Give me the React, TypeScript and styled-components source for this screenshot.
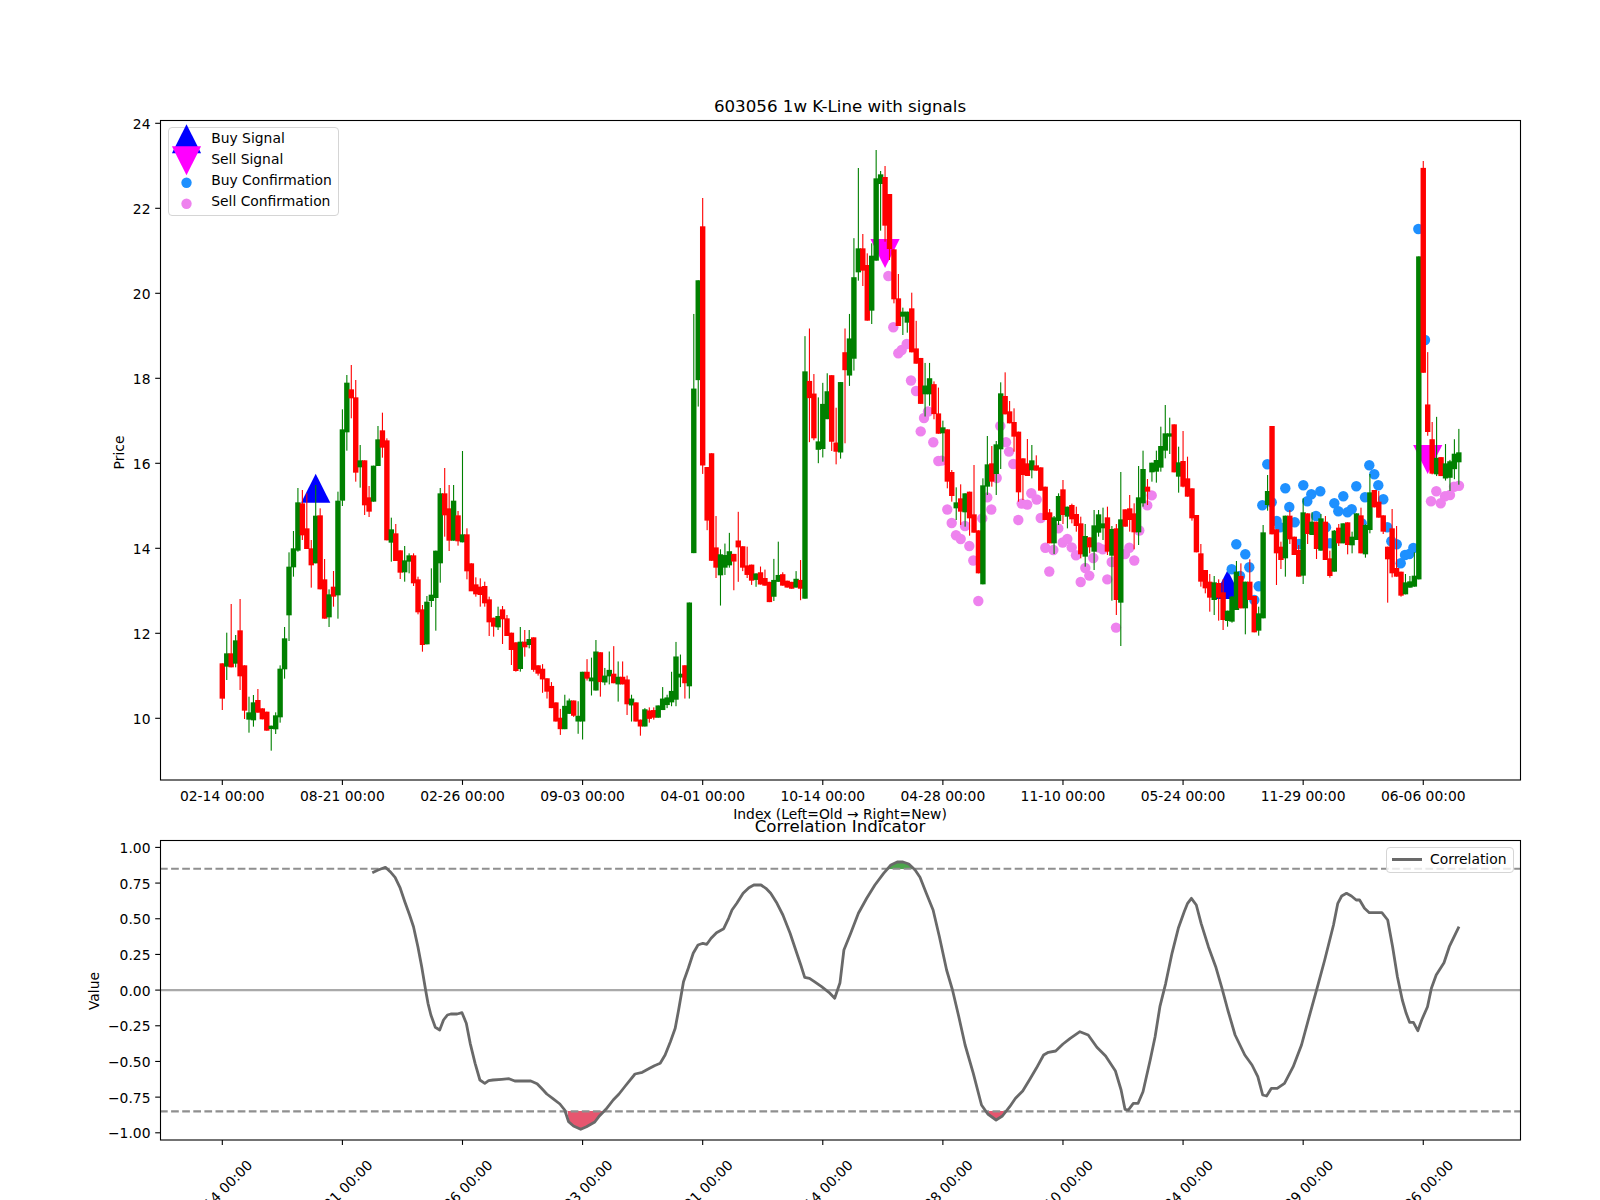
import React from 'react';
import styled, { createGlobalStyle } from 'styled-components';

const GlobalStyle = createGlobalStyle`
    html, body {
        margin: 0;
        padding: 0;
        background: #fff;
    }
    body {
        font-family: "DejaVu Sans", sans-serif;
    }
`;

const Figure = styled.div`
    display: flex;
    flex-direction: column;
    width: 1600px;
    height: 1200px;
    overflow: hidden;
    background: #fff;
`;

const Panel = styled.section<{ $height: number }>`
    position: relative;
    flex: none;
    width: 1600px;
    height: ${p => p.$height}px;
`;

const ChartSvg = styled.svg`
    display: block;
    width: 100%;
    height: 100%;
    overflow: visible;
`;

const Frame = styled.rect`
    fill: none;
    stroke: #000;
    stroke-width: 1.1px;
`;

const Tick = styled.line`
    stroke: #000;
    stroke-width: 1.1px;
`;

const TickLabel = styled.text`
    font-family: "DejaVu Sans", sans-serif;
    font-size: 13.89px;
    fill: #000;
`;

const ChartTitle = styled.text`
    font-family: "DejaVu Sans", sans-serif;
    font-size: 16.67px;
    fill: #000;
    text-anchor: middle;
`;

const Legend = styled.div`
    position: absolute;
    box-sizing: border-box;
    border: 1.4px solid #d5d5d5;
    border-radius: 4px;
    background: rgba(255, 255, 255, 0.8);
    font-size: 13.89px;
    color: #000;
    white-space: nowrap;
`;

const SignalLegend = styled(Legend)`
    left: 167.5px;
    top: 127px;
    width: 171px;
    height: 88.5px;
`;

const CorrelationLegend = styled(Legend)`
    right: 86px;
    top: 47px;
    width: 128px;
    height: 25.5px;
    display: flex;
    align-items: center;
    gap: 8.5px;
    padding: 0 0 2px 4.5px;
`;

const LegendRow = styled.div`
    display: flex;
    align-items: center;
    height: 20.9px;
`;

const LegendMarker = styled.svg`
    flex: none;
    width: 29px;
    height: 20.7px;
    margin: 0 10px 0 3.7px;
    overflow: visible;
`;

const LegendLine = styled.span`
    flex: none;
    width: 30px;
    height: 2.8px;
    margin-top: 2px;
    background: #696969;
`;

type Row = [number, number, number, number, number];

const R = 0;
const G = 1;

const BASE_X = 222.3;
const STEP_X = 4.448;
const BODY_W = 5.4;

// rows were read off crops of the price chart: colour, body top, body bottom, wick top, wick bottom
const seg = (start: number, y0: number, sy: number, rows: Row[]) =>
    rows.map(([c, a, b, d, e], n) => ({
        x: BASE_X + STEP_X * (start + n),
        color: c === G ? '#008000' : '#ff0000',
        top: y0 + a / sy,
        bottom: y0 + b / sy,
        high: y0 + d / sy,
        low: y0 + e / sy,
    }));

const candles = [
    ...seg(0, 380, 3, [
        [R, 850, 956, 850, 990], [G, 820, 860, 758, 900], [R, 820, 862, 672, 862], [G, 781, 851, 765, 862],
        [R, 751, 889, 657, 930], [R, 856, 992, 856, 1017], [G, 997, 1019, 950, 1058], [G, 967, 1021, 945, 1040],
        [R, 960, 998, 927, 998], [R, 985, 1018, 985, 1018], [R, 995, 1052, 995, 1052], [G, 1037, 1047, 1037, 1112],
        [G, 1006, 1048, 997, 1062], [G, 866, 1012, 856, 1028], [G, 775, 868, 741, 896], [G, 560, 706, 517, 783],
        [G, 505, 562, 453, 590], [G, 367, 512, 324, 515], [R, 370, 466, 330, 480], [R, 445, 507, 340, 507],
        [R, 505, 556, 480, 623], [G, 407, 550, 315, 550], [R, 406, 628, 385, 628], [R, 598, 716, 537, 716],
        [G, 643, 712, 628, 741], [R, 620, 650, 573, 680], [G, 362, 646, 335, 716], [G, 148, 362, 88, 378],
        [G, 8, 157, -15, 212], [R, 28, 55, -45, 115], [R, 52, 278, 0, 305], [G, 241, 262, 195, 323],
        [R, 241, 376, 241, 405], [R, 352, 395, 318, 411], [G, 257, 365, 257, 365], [G, 178, 258, 138, 258],
        [R, 151, 203, 98, 233], [R, 181, 481, 175, 481], [G, 448, 488, 413, 545], [R, 460, 543, 432, 543],
        [R, 511, 578, 511, 597], [G, 541, 577, 498, 605], [G, 526, 545, 520, 580], [R, 526, 610, 520, 618],
        [R, 598, 697, 590, 703], [R, 688, 795, 675, 815], [G, 665, 793, 648, 793], [G, 644, 663, 565, 681],
        [G, 512, 654, 512, 752], [G, 340, 550, 324, 608], [R, 340, 406, 264, 470], [R, 385, 482, 315, 513],
        [G, 362, 482, 315, 482], [R, 406, 484, 393, 497], [G, 463, 487, 213, 487], [R, 463, 574, 445, 598],
        [R, 550, 634, 550, 632], [R, 613, 643, 592, 650], [R, 620, 645, 595, 680], [R, 618, 670, 605, 680],
        [R, 658, 727, 650, 768], [R, 713, 740, 713, 770], [G, 708, 742, 680, 750], [R, 688, 718, 678, 792],
        [R, 715, 768, 705, 768], [R, 758, 810, 758, 855], [R, 787, 873, 787, 875], [G, 785, 867, 741, 875],
        [R, 785, 802, 750, 830], [G, 777, 795, 750, 805],
    ]),
    ...seg(70, 180, 2.613, [
        [R, 1195, 1280, 1195, 1285], [R, 1268, 1290, 1268, 1295], [R, 1277, 1305, 1265, 1340], [R, 1302, 1337, 1302, 1355],
        [R, 1322, 1380, 1312, 1380], [R, 1365, 1415, 1365, 1415], [R, 1405, 1435, 1382, 1450], [G, 1374, 1435, 1345, 1435],
        [G, 1360, 1395, 1355, 1395], [R, 1360, 1400, 1360, 1403], [G, 1400, 1415, 1362, 1447], [G, 1285, 1415, 1285, 1462],
        [R, 1285, 1303, 1252, 1308], [G, 1300, 1310, 1248, 1347], [G, 1232, 1334, 1202, 1334], [R, 1234, 1312, 1234, 1350],
        [G, 1295, 1313, 1275, 1320], [G, 1280, 1297, 1232, 1318], [R, 1290, 1315, 1218, 1315], [G, 1298, 1318, 1258, 1363],
        [R, 1298, 1318, 1258, 1318], [R, 1305, 1370, 1295, 1398], [G, 1355, 1373, 1345, 1415], [R, 1365, 1415, 1365, 1415],
        [R, 1410, 1428, 1410, 1452], [G, 1383, 1428, 1380, 1428], [R, 1386, 1408, 1378, 1418], [R, 1385, 1405, 1378, 1410],
        [G, 1373, 1405, 1373, 1405], [G, 1355, 1385, 1325, 1385], [G, 1352, 1372, 1345, 1380], [G, 1335, 1365, 1285, 1375],
        [G, 1245, 1358, 1207, 1375], [G, 1290, 1300, 1240, 1325], [R, 1268, 1315, 1268, 1355], [G, 1104, 1323, 1104, 1355],
        [G, 545, 975, 350, 975], [G, 262, 523, 262, 592], [R, 121, 746, 47, 768], [R, 750, 890, 750, 915],
        [R, 714, 995, 714, 995], [R, 960, 1013, 878, 1040], [G, 978, 1033, 965, 1112], [G, 980, 1013, 950, 1032],
        [G, 970, 1007, 922, 1013], [R, 977, 997, 977, 1072], [R, 942, 960, 867, 1050], [R, 957, 1013, 957, 1022],
        [R, 1007, 1032, 958, 1040], [R, 1005, 1047, 1005, 1058], [G, 1028, 1045, 1028, 1063], [R, 1025, 1057, 1010, 1057],
        [R, 1040, 1060, 1018, 1060], [R, 1050, 1103, 1050, 1103], [G, 1045, 1089, 990, 1100], [G, 1032, 1050, 945, 1050],
        [R, 1030, 1060, 1025, 1060], [R, 1047, 1065, 1047, 1065], [R, 1050, 1068, 1050, 1068], [G, 1042, 1065, 1022, 1065],
        [R, 1045, 1068, 993, 1098], [G, 500, 1094, 408, 1094], [R, 525, 570, 388, 685], [R, 558, 675, 507, 680],
        [G, 683, 705, 568, 740], [G, 585, 703, 530, 725], [G, 552, 625, 505, 625], [R, 510, 684, 510, 708],
        [R, 686, 710, 595, 743], [G, 528, 712, 528, 728], [R, 450, 497, 388, 688], [G, 414, 511, 350, 538],
        [G, 254, 467, 152, 498],
    ]),
    ...seg(143, 130, 3, [
        [G, 355, 427, 114, 452], [R, 355, 422, 312, 468], [R, 405, 572, 370, 572], [G, 377, 542, 340, 582],
        [G, 145, 392, 60, 392], [G, 133, 162, 123, 302], [R, 141, 287, 108, 335], [R, 192, 357, 192, 390],
        [R, 358, 508, 358, 520], [R, 505, 588, 432, 588], [G, 545, 560, 533, 615], [G, 545, 578, 545, 608],
        [R, 535, 667, 488, 667],
    ]),
    ...seg(156, 180, 2.613, [
        [R, 440, 480, 368, 480], [R, 465, 585, 465, 585], [G, 537, 560, 478, 618], [G, 518, 560, 478, 590],
    ]),
    ...seg(160, 130, 2.904, [
        [R, 738, 825, 730, 840], [R, 823, 882, 748, 882],
    ]),
    ...seg(162, 340, 3, [
        [G, 262, 280, 242, 365], [R, 268, 425, 268, 445], [R, 396, 468, 390, 485], [G, 487, 505, 442, 540],
        [R, 475, 515, 433, 555], [G, 460, 517, 460, 560], [R, 455, 535, 455, 587], [R, 523, 578, 375, 578],
        [R, 571, 700, 571, 700], [G, 436, 733, 415, 733], [G, 373, 440, 288, 465], [R, 370, 425, 318, 440],
        [G, 313, 402, 303, 465], [G, 160, 328, 127, 387], [R, 168, 223, 97, 223], [R, 214, 250, 183, 250],
        [R, 246, 290, 205, 335], [R, 275, 457, 275, 485], [R, 355, 405, 355, 480], [R, 370, 408, 297, 408],
        [G, 361, 391, 315, 415], [R, 376, 392, 346, 392], [R, 382, 452, 382, 452], [R, 440, 540, 440, 540],
        [R, 517, 610, 507, 610], [G, 532, 610, 528, 642], [G, 468, 543, 460, 555], [R, 448, 525, 420, 552],
        [G, 500, 530, 500, 565], [R, 495, 538, 491, 550], [R, 522, 558, 500, 575], [R, 550, 643, 530, 655],
        [G, 588, 650, 552, 680], [R, 592, 622, 592, 640], [G, 556, 635, 510, 690], [G, 523, 578, 510, 590],
        [G, 550, 565, 503, 600], [R, 532, 635, 500, 645], [G, 567, 647, 558, 782], [R, 565, 780, 552, 825],
    ]),
    ...seg(202, 380, 3, [
        [G, 418, 668, 276, 798], [R, 388, 440, 388, 440], [R, 385, 420, 345, 455], [R, 400, 457, 370, 508],
        [G, 352, 457, 258, 495], [G, 267, 370, 212, 380], [R, 320, 335, 297, 375], [G, 248, 277, 248, 305],
        [G, 240, 275, 212, 308], [G, 198, 263, 140, 275], [G, 160, 212, 75, 235], [G, 160, 170, 113, 222],
        [R, 133, 277, 133, 277], [G, 247, 290, 200, 338], [R, 243, 320, 153, 322], [R, 295, 350, 230, 350],
        [R, 325, 415, 325, 422], [R, 405, 517, 405, 517],
    ]),
    ...seg(220, 420, 3, [
        [R, 400, 485, 372, 500], [R, 450, 505, 450, 520], [R, 485, 533, 462, 575], [G, 487, 540, 468, 585],
        [R, 489, 533, 478, 602], [R, 517, 600, 478, 630], [G, 572, 603, 572, 620], [G, 530, 605, 528, 608],
        [G, 455, 570, 423, 570], [R, 468, 565, 430, 565], [G, 485, 565, 485, 643], [R, 485, 540, 418, 540],
        [R, 528, 637, 528, 637], [G, 580, 632, 560, 647], [G, 337, 595, 315, 595], [G, 213, 255, 165, 272],
        [R, 18, 343, 18, 343], [R, 328, 400, 328, 495], [R, 380, 420, 365, 447], [G, 287, 415, 287, 470],
        [R, 287, 358, 270, 372], [R, 350, 405, 350, 405], [R, 390, 470, 375, 470], [G, 277, 467, 235, 492],
        [R, 280, 342, 280, 372],
    ]),
    ...seg(245, 420, 3, [
        [G, 305, 345, 277, 345], [R, 305, 387, 305, 417], [G, 295, 392, 282, 392], [R, 305, 420, 288, 420],
        [R, 415, 468, 392, 473], [G, 332, 455, 330, 455], [R, 323, 370, 312, 378], [G, 310, 370, 310, 370],
        [R, 307, 375, 307, 403], [G, 350, 376, 335, 400], [G, 280, 360, 280, 360], [R, 286, 400, 263, 400],
        [G, 315, 403, 313, 413], [G, 217, 330, 162, 340], [R, 210, 262, 210, 262], [R, 245, 293, 213, 293],
        [R, 286, 335, 286, 342], [R, 380, 418, 380, 548], [R, 325, 460, 267, 472], [R, 444, 470, 318, 470],
        [R, 455, 527, 455, 530], [G, 487, 523, 462, 523], [G, 484, 503, 468, 503], [G, 467, 500, 397, 500],
    ]),
    ...seg(269, 130, 2.904, [
        [G, 367, 1305, 367, 1305], [R, 110, 705, 90, 705], [R, 797, 877, 645, 888], [R, 898, 998, 848, 1000],
        [G, 952, 1000, 833, 1005], [R, 950, 1005, 950, 1005], [G, 968, 1012, 912, 1018], [G, 962, 1010, 958, 1048],
        [G, 940, 985, 898, 1014], [G, 936, 965, 868, 1030],
    ]),
];

const sellDots: [number, number][] = [
    [888.3, 276], [893.3, 327.3], [898.3, 353.3], [901.7, 350], [906.7, 344], [911, 380.5], [916, 391], [924, 418],
    [928, 411.5], [920.7, 431.4], [933.3, 442.3], [938.3, 461], [941.7, 460.6], [947.3, 509.5], [951.7, 523], [956, 535.3],
    [960.7, 539], [965, 526], [969.3, 546], [973.3, 560.5], [978.3, 601], [982.3, 518.4], [987.3, 497.4], [991.3, 509.5],
    [996.7, 478], [1000.3, 426], [1006, 442.3], [1009, 451.6], [1013.3, 464], [1018.3, 520], [1021.7, 503.6], [1027.3, 504.6],
    [1031.3, 493.3], [1036.7, 499.5], [1040.7, 518], [1045.3, 547.7], [1049.3, 571.5], [1053.3, 550], [1058.3, 528.4],
    [1062.7, 542.5], [1067.3, 539], [1071.7, 547.4], [1076, 555.3], [1080.7, 582], [1085.3, 568], [1089.3, 575.6],
    [1093.3, 558], [1098.3, 547.4], [1102.7, 549.4], [1107.3, 579.4], [1111.7, 562], [1116, 627.6], [1125, 554],
    [1129.3, 547.7], [1134.3, 560.5], [1139.3, 530.5], [1147.3, 505.4], [1151.7, 495.4], [1431, 501.3], [1436.3, 491.3],
    [1440.7, 503.3], [1445, 496.3], [1450, 495], [1454, 486.7], [1459, 485.7],
];

const buyDots: [number, number][] = [
    [1418.3, 229], [1425, 340], [1236.3, 544.3], [1245.3, 554.3], [1249.3, 567.3], [1231.7, 569.3], [1240, 576],
    [1258.7, 586.3], [1254.3, 600], [1267.3, 464.3], [1262.3, 505.3], [1271.7, 502.3], [1276.7, 521], [1280, 527.3],
    [1285.3, 488.3], [1289.3, 507], [1294.7, 522.3], [1299, 544], [1303.3, 485.3], [1311.3, 494.3], [1307.3, 501.3],
    [1320.3, 491.3], [1316, 516], [1326, 527.3], [1330, 543.3], [1334.3, 503.3], [1338.3, 511.3], [1343.3, 496.3],
    [1347.5, 512.3], [1351.7, 509.3], [1356.3, 486.3], [1361.7, 523.3], [1365, 497.3], [1369.3, 465.3], [1374.3, 474.3],
    [1378.3, 485.3], [1383.3, 499.3], [1387.3, 527.3], [1391.3, 541.3], [1396.7, 544.3], [1400.7, 563.3], [1405, 555],
    [1409.3, 554], [1413.3, 548],
];

const DOT_R = 5.2;

const buyMarks = [21, 226].map(i => ({ x: BASE_X + STEP_X * i, base: i === 21 ? 502.7 : 599 }));
const sellMarks = [149, 271].map(i => ({ x: BASE_X + STEP_X * i, base: i === 149 ? 239 : 445 }));

const upTriangle = (x: number, base: number) => `${x - 14.6},${base} ${x + 14.6},${base} ${x},${base - 29}`;
const downTriangle = (x: number, base: number) => `${x - 14.6},${base} ${x + 14.6},${base} ${x},${base + 29}`;

const dateLabels = [
    '02-14 00:00', '08-21 00:00', '02-26 00:00', '09-03 00:00', '04-01 00:00', '10-14 00:00',
    '04-28 00:00', '11-10 00:00', '05-24 00:00', '11-29 00:00', '06-06 00:00',
];
const tickX = (n: number) => BASE_X + STEP_X * 27 * n;

const priceY = (p: number) => 718.3 - (p - 10) * 42.5;
const priceTicks = [10, 12, 14, 16, 18, 20, 22, 24];

const valueY = (v: number) => 990.1 - v * 142.7;
const valueTicks = [1, 0.75, 0.5, 0.25, 0, -0.25, -0.5, -0.75, -1];

// correlation curve, read from two crops that were scaled 2.063x / 3x
const leftCurve: [number, number][] = [
    [603, 248], [615, 240], [630, 232], [640, 245], [650, 262], [660, 292], [670, 335], [680, 375], [688, 410], [697, 470],
    [705, 530], [713, 600], [718, 640], [724, 675], [733, 712], [742, 720], [750, 690], [758, 675], [765, 672], [778, 672],
    [788, 668], [797, 700], [805, 760], [815, 820], [825, 870], [835, 880], [843, 872], [852, 870], [870, 868], [885, 866],
    [897, 873], [915, 873], [930, 873], [943, 881], [952, 895], [963, 912], [975, 925], [990, 942], [1000, 960], [1008, 995],
    [1018, 1008], [1033, 1018], [1045, 1010], [1062, 996], [1072, 977], [1085, 958], [1100, 930], [1112, 912], [1125, 888],
    [1145, 852], [1160, 847], [1175, 835], [1185, 827], [1197, 820], [1207, 795], [1218, 755], [1228, 715], [1235, 660],
    [1245, 575], [1255, 535], [1265, 490], [1275, 465], [1285, 460], [1293, 463], [1302, 445], [1313, 428], [1328, 416],
    [1338, 385], [1345, 360], [1355, 340], [1368, 310], [1380, 293], [1390, 285], [1405, 285], [1415, 295], [1425, 310],
    [1438, 340], [1450, 375], [1465, 430], [1480, 495], [1487, 525], [1495, 562], [1505, 565], [1515, 575], [1530, 590],
    [1545, 607], [1557, 625],
];
const rightCurve: [number, number][] = [
    [0, 578], [8, 480], [22, 430], [38, 370], [55, 325], [72, 285], [90, 250], [105, 225], [118, 216], [130, 216], [142, 222],
    [155, 240], [165, 262], [178, 310], [192, 360], [205, 440], [220, 540], [232, 600], [245, 680], [258, 765], [275, 850],
    [292, 945], [305, 972], [322, 990], [335, 978], [350, 950], [362, 925], [377, 903], [392, 867], [405, 835], [420, 795],
    [430, 787], [445, 783], [460, 762], [475, 745], [495, 725], [512, 735], [530, 772], [548, 798], [568, 842], [580, 900],
    [588, 958], [595, 960], [605, 940], [615, 940], [625, 905], [640, 810], [650, 740], [660, 650], [672, 580], [685, 490],
    [698, 415], [710, 365], [717, 340], [725, 325], [735, 345], [745, 400], [760, 470], [775, 530], [788, 595], [800, 660],
    [815, 735], [835, 795], [850, 825], [862, 860], [872, 915], [880, 918], [890, 895], [902, 895], [917, 880], [935, 830],
    [952, 765], [968, 680], [985, 590], [1000, 510], [1018, 405], [1027, 340], [1035, 318], [1045, 310], [1055, 318],
    [1065, 330], [1072, 330], [1082, 355], [1092, 368], [1105, 368], [1118, 368], [1130, 390], [1140, 470], [1150, 560],
    [1160, 630], [1168, 670], [1175, 697], [1183, 697], [1192, 722], [1200, 690], [1212, 650], [1220, 595], [1230, 555],
    [1246, 518], [1257, 470], [1277, 410],
];

const fromLeft = (pts: [number, number][]) =>
    pts.map(([x, y]) => `${(80 + x / 2.063).toFixed(1)},${(790 + y / 3).toFixed(1)}`).join(' ');
const fromRight = (pts: [number, number][]) =>
    pts.map(([x, y]) => `${(840 + x / 2.063).toFixed(1)},${(790 + y / 3).toFixed(1)}`).join(' ');

const redCapA: [number, number][] = [[1006, 963], [1008, 995], [1018, 1008], [1033, 1018], [1045, 1010], [1062, 996], [1072, 977], [1080, 963]];
const redCapB: [number, number][] = [[298, 963], [305, 972], [322, 990], [335, 978], [343, 963]];
const greenCap: [number, number][] = [[98, 237], [105, 225], [118, 216], [130, 216], [142, 222], [152, 237]];

const formatValue = (v: number) => `${v < 0 ? '\u2212' : ''}${Math.abs(v).toFixed(2)}`;

const PriceChart = () => (
    <Panel $height={800}>
        <ChartSvg viewBox="0 0 1600 800">
            <ChartTitle x={840} y={111.5}>603056 1w K-Line with signals</ChartTitle>

            {buyMarks.map(m => <polygon key={m.x} points={upTriangle(m.x, m.base)} fill="#0000ff" />)}
            {sellMarks.map(m => <polygon key={m.x} points={downTriangle(m.x, m.base)} fill="#ff00ff" />)}
            {buyDots.map(([x, y]) => <circle key={`${x}-${y}`} cx={x} cy={y} r={DOT_R} fill="#1e90ff" />)}
            {sellDots.map(([x, y]) => <circle key={`${x}-${y}`} cx={x} cy={y} r={DOT_R} fill="#ee82ee" />)}

            {candles.map(c => (
                <g key={c.x} fill={c.color}>
                    <rect x={c.x - 0.55} y={c.high} width={1.1} height={c.low - c.high} />
                    <rect x={c.x - BODY_W / 2} y={c.top} width={BODY_W} height={c.bottom - c.top} />
                </g>
            ))}

            <Frame x={160.5} y={120.5} width={1360} height={659.5} />

            {priceTicks.map(p => (
                <g key={p}>
                    <Tick x1={155.2} x2={160} y1={priceY(p)} y2={priceY(p)} />
                    <TickLabel x={150.5} y={priceY(p) + 6} textAnchor="end">{p}</TickLabel>
                </g>
            ))}
            {dateLabels.map((label, n) => (
                <g key={label}>
                    <Tick x1={tickX(n)} x2={tickX(n)} y1={780} y2={784.9} />
                    <TickLabel x={tickX(n)} y={800.7} textAnchor="middle">{label}</TickLabel>
                </g>
            ))}

            <TickLabel x={840} y={819} textAnchor="middle">Index (Left=Old → Right=New)</TickLabel>
            <TickLabel transform="translate(123.5 452.5) rotate(-90)" textAnchor="middle">Price</TickLabel>
        </ChartSvg>

        <SignalLegend>
            <LegendRow>
                <LegendMarker viewBox="-14.5 -10.35 29 20.7">
                    <polygon points="-14.6,14.9 14.6,14.9 0,-14.1" fill="#0000ff" />
                </LegendMarker>
                Buy Signal
            </LegendRow>
            <LegendRow>
                <LegendMarker viewBox="-14.5 -10.35 29 20.7">
                    <polygon points="-14.6,-13.1 14.6,-13.1 0,15.9" fill="#ff00ff" />
                </LegendMarker>
                Sell Signal
            </LegendRow>
            <LegendRow>
                <LegendMarker viewBox="-14.5 -10.35 29 20.7">
                    <circle cx={0} cy={2.4} r={DOT_R} fill="#1e90ff" />
                </LegendMarker>
                Buy Confirmation
            </LegendRow>
            <LegendRow>
                <LegendMarker viewBox="-14.5 -10.35 29 20.7">
                    <circle cx={0} cy={2.4} r={DOT_R} fill="#ee82ee" />
                </LegendMarker>
                Sell Confirmation
            </LegendRow>
        </SignalLegend>
    </Panel>
);

const CorrelationChart = () => (
    <Panel $height={400}>
        <ChartSvg viewBox="0 800 1600 400">
            <ChartTitle x={840} y={831.5}>Correlation Indicator</ChartTitle>

            <polygon points={fromLeft(redCapA)} fill="#e6566f" />
            <polygon points={fromRight(redCapB)} fill="#e6566f" />
            <polygon points={fromRight(greenCap)} fill="#4da64d" />

            <line x1={160} x2={1520} y1={valueY(0)} y2={valueY(0)} stroke="#a9a9a9" strokeWidth={2.1} />
            <line x1={160} x2={1520} y1={valueY(0.85)} y2={valueY(0.85)} stroke="#8f8f8f" strokeWidth={2.1} strokeDasharray="7.7 3.4" />
            <line x1={160} x2={1520} y1={valueY(-0.85)} y2={valueY(-0.85)} stroke="#8f8f8f" strokeWidth={2.1} strokeDasharray="7.7 3.4" />

            <polyline
                points={`${fromLeft(leftCurve)} ${fromRight(rightCurve)}`}
                fill="none"
                stroke="#696969"
                strokeWidth={2.8}
                strokeLinejoin="round"
            />

            <Frame x={160.5} y={840.5} width={1360} height={299.5} />

            {valueTicks.map(v => (
                <g key={v}>
                    <Tick x1={155.2} x2={160} y1={valueY(v)} y2={valueY(v)} />
                    <TickLabel x={150.5} y={valueY(v) + 5.5} textAnchor="end">{formatValue(v)}</TickLabel>
                </g>
            ))}
            {dateLabels.map((label, n) => (
                <g key={label}>
                    <Tick x1={tickX(n)} x2={tickX(n)} y1={1140} y2={1144.9} />
                    <TickLabel
                        transform={`translate(${tickX(n) - 2.5} 1192.5) rotate(-45)`}
                        textAnchor="middle"
                        dominantBaseline="central"
                    >
                        {label}
                    </TickLabel>
                </g>
            ))}

            <TickLabel transform="translate(98.5 991) rotate(-90)" textAnchor="middle">Value</TickLabel>
        </ChartSvg>

        <CorrelationLegend>
            <LegendLine />
            Correlation
        </CorrelationLegend>
    </Panel>
);

const App = () => (
    <Figure>
        <GlobalStyle />
        <PriceChart />
        <CorrelationChart />
    </Figure>
);

export default App;
